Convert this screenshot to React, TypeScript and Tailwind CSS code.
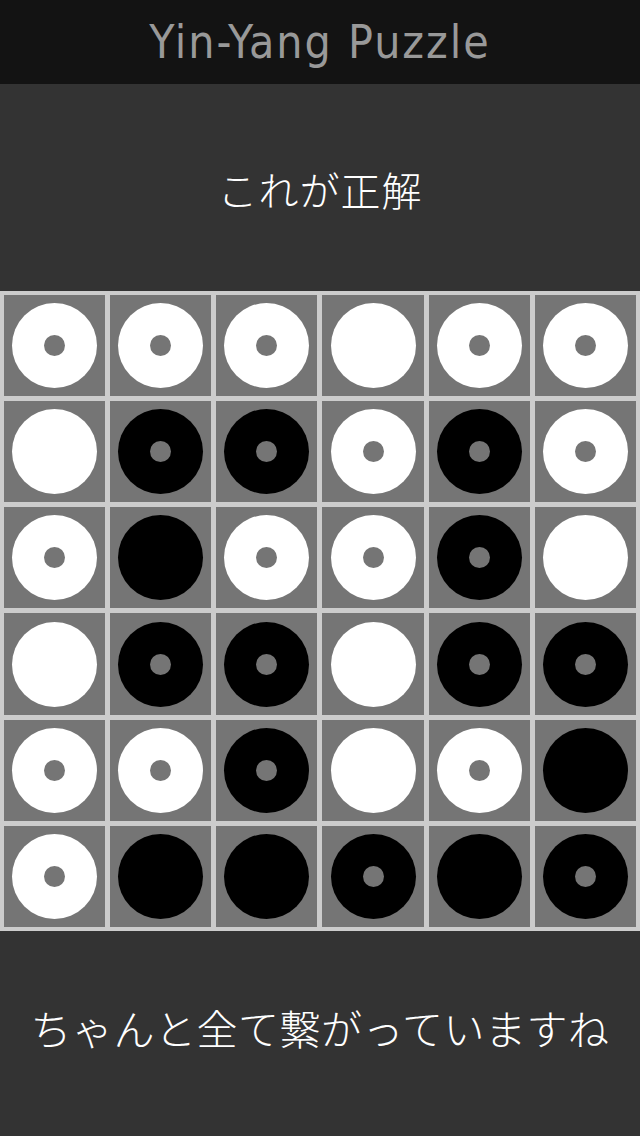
import React from 'react';

// W = white stone, B = black stone; lowercase = no centre dot
const board = [
  ['W', 'W', 'W', 'w', 'W', 'W'],
  ['w', 'B', 'B', 'W', 'B', 'W'],
  ['W', 'b', 'W', 'W', 'B', 'w'],
  ['w', 'B', 'B', 'w', 'B', 'B'],
  ['W', 'W', 'B', 'w', 'W', 'b'],
  ['W', 'b', 'b', 'B', 'b', 'B'],
];

const Cell: React.FC<{ v: string }> = ({ v }) => {
  const white = v.toUpperCase() === 'W';
  const dot = v === 'W' || v === 'B';
  return (
    <div className="bg-[#757575] flex items-center justify-center">
      <div
        className={`w-[85px] h-[85px] rounded-full flex items-center justify-center ${
          white ? 'bg-white' : 'bg-black'
        }`}
      >
        {dot && <div className="w-[21px] h-[21px] rounded-full bg-[#757575]"></div>}
      </div>
    </div>
  );
};

export default function App() {
  return (
    <div className="w-[640px] h-[1136px] bg-[#333333] flex flex-col overflow-hidden">
      {/* Header */}
      <div className="h-[84px] bg-[#131313] flex items-center justify-center shrink-0">
        <span
          className="text-[#999999] text-[46px] font-extralight tracking-[2px] leading-none"
          style={{ fontFamily: '"DejaVu Sans Condensed", "DejaVu Sans", sans-serif' }}
        >
          Yin-Yang Puzzle
        </span>
      </div>

      {/* Result message */}
      <div className="h-[207px] flex items-center justify-center pt-[2px] shrink-0">
        <span
          className="text-white text-[40px] font-light leading-none tracking-[1px]"
          style={{ fontFamily: '"Noto Sans CJK JP", sans-serif' }}
        >
          これが正解
        </span>
      </div>

      {/* Board */}
      <div className="w-[640px] h-[640px] bg-[#cccccc] p-[4px] grid grid-cols-6 grid-rows-6 gap-[5px] shrink-0">
        {board.flat().map((v, i) => (
          <Cell key={i} v={v} />
        ))}
      </div>

      {/* Comment */}
      <div className="flex-1 flex items-center justify-center pb-[12px]">
        <span
          className="text-white text-[41px] font-light leading-none tracking-[0.5px]"
          style={{ fontFamily: '"Noto Sans CJK JP", sans-serif' }}
        >
          ちゃんと全て繋がっていますね
        </span>
      </div>
    </div>
  );
}
